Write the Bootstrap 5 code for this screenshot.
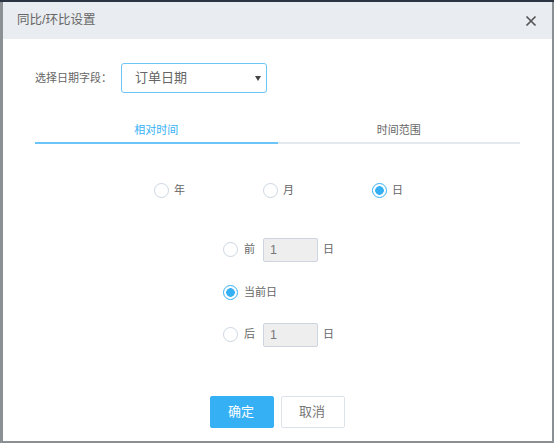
<!DOCTYPE html>
<html lang="zh">
<head>
  <meta charset="UTF-8">
  <title>同比/环比设置</title>
  <link href="https://cdn.jsdelivr.net/npm/bootstrap@5.3.3/dist/css/bootstrap.min.css" rel="stylesheet">
  <style>
    html, body { height: 100%; }
    body {
      background: #8b9095;
      border-top: 2px solid #2b3442;
      padding: 0 2px 2px 3px;
      overflow: hidden;
      font-family: "Liberation Sans", "Noto Sans CJK SC", sans-serif;
      font-size: 11px;
      color: #666;
    }
    .dlg { width: 549px; height: 439px; border: 0; border-radius: 0; }
    .dlg-head {
      height: 37px;
      padding: 0 15px 0 14px;
      background: #e9ecf0;
      border: 0;
      border-radius: 0;
      font-size: 12.5px;
      color: #666;
    }
    .dlg-close { width: 12px; height: 12px; display: block; background: none; border: 0; padding: 0; }
    .dlg-close svg { display: block; }
    .dlg-body { padding: 24px 32px 0; }
    .field-row { height: 30px; }
    .field-label { width: 86px; }
    .date-select {
      width: 146px;
      height: 30px;
      padding: 0 13px;
      font-size: 13px;
      color: #666;
      border: 1px solid #6cc4f7;
      border-radius: 3px;
      background: #fff url("data:image/svg+xml,%3Csvg xmlns='http://www.w3.org/2000/svg' width='6' height='5'%3E%3Cpath d='M0 0h6L3 5z' fill='%23444'/%3E%3C/svg%3E") no-repeat right 5px center;
      appearance: none;
    }
    .tab-row { margin-top: 29px; width: 485px; }
    .tab-item {
      width: 50%;
      height: 22px;
      text-align: center;
      border-bottom: 2px solid #e3e8ef;
      line-height: 16px;
      color: #666;
      text-decoration: none;
    }
    .tab-item.active { color: #35b0f5; border-bottom-color: #6cc4f7; }
    .unit-row { margin-top: 38px; width: 327px; margin-left: 119px; }
    .unit-item { width: 109px; }
    .unit-item .pick { margin-right: 5px; }
    .pick {
      width: 15px;
      height: 15px;
      margin: 0 6px 0 0;
      flex: none;
      border: 1px solid #ccd5e0;
      box-shadow: none;
    }
    .pick:checked {
      background-color: #fff;
      border-color: #35b0f5;
      background-image: radial-gradient(circle, #35b0f5 0 4px, transparent 4.6px);
    }
    .pick:focus { box-shadow: none; border-color: #ccd5e0; }
    .pick:checked:focus { border-color: #35b0f5; }
    .range-col { margin: 39px 0 0 188px; }
    .range-row { height: 24px; margin-bottom: 19px; }
    .range-row:nth-child(2) { margin-bottom: 18px; }
    .range-row:last-child { margin-bottom: 0; }
    .num-box {
      width: 55px;
      height: 24px;
      margin: 0 5px 0 8px;
      padding: 0 6px;
      font-size: 12.5px;
      color: #777;
      background: #eee;
      border: 1px solid #ccd5e0;
      border-radius: 2px;
    }
    .num-box:disabled { background: #eee; }
    .dlg-foot { position: absolute; left: 0; right: 0; top: 394px; }
    .btn-ok, .btn-no {
      width: 64px;
      height: 32px;
      padding: 0 2px 0 0;
      font-size: 13px;
      border-radius: 2px;
    }
    .btn-ok { background: #35b0f5; border: 1px solid #35b0f5; color: #fff; margin-right: 7px; }
    .btn-no { background: #fff; border: 1px solid #dde3ea; color: #777; }
  </style>
</head>
<body>

<div class="card dlg position-relative">
  <div class="dlg-head d-flex justify-content-between align-items-center">
    <span>同比/环比设置</span>
    <button type="button" class="dlg-close" aria-label="Close">
      <svg width="12" height="12" viewBox="0 0 12 12"><path d="M1.5 1.5l9 9M10.5 1.5l-9 9" stroke="#555" stroke-width="1.7" fill="none"/></svg>
    </button>
  </div>
  <div class="dlg-body">
    <div class="field-row d-flex align-items-center">
      <label class="field-label" for="dateField">选择日期字段：</label>
      <select id="dateField" class="date-select">
        <option>订单日期</option>
      </select>
    </div>

    <div class="tab-row d-flex">
      <a class="tab-item active" href="#">相对时间</a>
      <a class="tab-item" href="#">时间范围</a>
    </div>

    <div class="unit-row d-flex">
      <label class="unit-item d-flex align-items-center"><input class="form-check-input pick" type="radio" name="unit">年</label>
      <label class="unit-item d-flex align-items-center"><input class="form-check-input pick" type="radio" name="unit">月</label>
      <label class="unit-item d-flex align-items-center"><input class="form-check-input pick" type="radio" name="unit" checked>日</label>
    </div>

    <div class="range-col">
      <div class="range-row d-flex align-items-center">
        <input class="form-check-input pick" type="radio" name="range"><span>前</span>
        <input class="num-box" type="text" value="1" disabled><span>日</span>
      </div>
      <div class="range-row d-flex align-items-center">
        <input class="form-check-input pick" type="radio" name="range" checked><span>当前日</span>
      </div>
      <div class="range-row d-flex align-items-center">
        <input class="form-check-input pick" type="radio" name="range"><span>后</span>
        <input class="num-box" type="text" value="1" disabled><span>日</span>
      </div>
    </div>
  </div>
  <div class="dlg-foot d-flex justify-content-center">
    <button type="button" class="btn btn-ok">确定</button>
    <button type="button" class="btn btn-no">取消</button>
  </div>
</div>

<script src="https://cdn.jsdelivr.net/npm/bootstrap@5.3.3/dist/js/bootstrap.bundle.min.js"></script>
</body>
</html>
